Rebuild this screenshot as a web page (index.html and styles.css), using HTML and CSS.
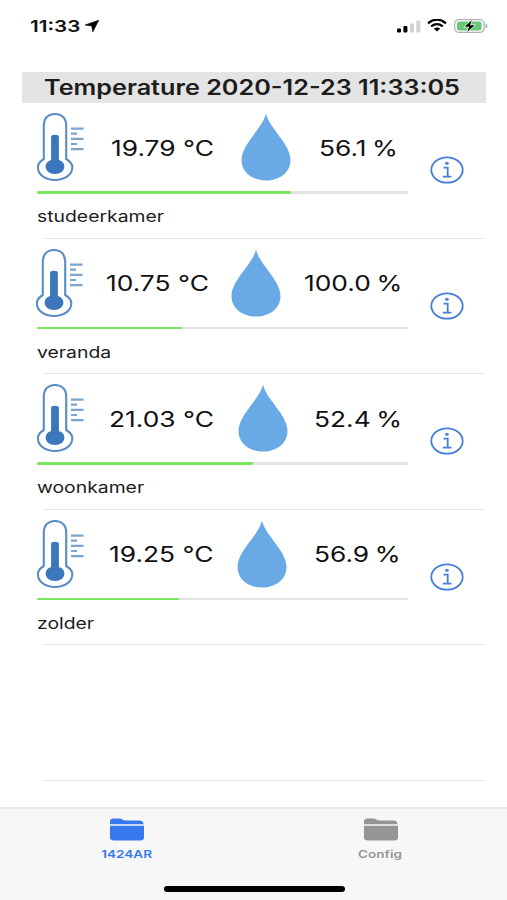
FILE: index.html
```html
<!DOCTYPE html>
<html lang="nl">
<head>
<meta charset="utf-8">
<title>Temperature</title>
<link rel="stylesheet" href="styles.css">
</head>
<body>
<svg class="defs" aria-hidden="true">
  <symbol id="thermo" viewBox="0 0 48 68" preserveAspectRatio="none">
    <path d="M6.8 46V12.5C6.8 5.4 11.2 1 18 1S29.2 5.4 29.2 12.5V46C33.2 48.3 35.3 50.6 35.3 54.2C35.3 61.7 27.7 67 18 67S.9 61.7 .9 54.2C.9 50.6 3 48.3 6.8 46Z" fill="#fff" stroke="#5b8dc4" stroke-width="2.1"/>
    <path d="M14.1 47.1V24Q14.1 21.7 18 21.7T21.9 24V47.1C25.4 48.2 27.4 50.5 27.4 53.5C27.4 58 23.3 61 18 61S8.6 58 8.6 53.5C8.6 50.5 10.6 48.2 14.1 47.1Z" fill="#3c76bc"/>
    <path d="M34 15.7H46.5M34 20.7H40M34 25.8H46.5M34 31H40M34 36.1H46.5" stroke="#7ba3cf" stroke-width="2.2"/>
  </symbol>
  <symbol id="drop" viewBox="0 0 50 68" preserveAspectRatio="none">
    <path d="M25 .5C28 15 49.5 31 49.5 47C49.5 59.5 38.5 67.5 25 67.5S.5 59.5 .5 47C.5 31 22 15 25 .5Z" fill="#69a9e6"/>
  </symbol>
  <symbol id="info" viewBox="0 0 34 28">
    <ellipse cx="17" cy="14" rx="15.7" ry="12.7" fill="none" stroke="#4480d8" stroke-width="1.8"/>
    <ellipse cx="16.9" cy="7.2" rx="1.9" ry="1.5" fill="#4480d8"/>
    <path d="M13.5 11.7H17.7V20.5M12.8 20.7H21.5" fill="none" stroke="#4480d8" stroke-width="1.8"/>
  </symbol>
  <symbol id="folder" viewBox="0 0 34 23">
    <path d="M0 6.3V3.5Q0 .5 3.7.5H9.2C12 .5 12.7 2.5 15.3 2.5H29.5Q33.5 2.5 33.5 6.3Z" fill="currentColor"/>
    <path d="M0 7.7H34V19.2Q34 22.5 30 22.5H4Q0 22.5 0 19.2Z" fill="currentColor"/>
  </symbol>
</svg>
<div class="screen">
  <header class="status">
    <div class="clock"><span class="wide">11:33</span></div>
    <svg class="arrow" viewBox="0 0 14 12"><path d="M13.7.3L7.8 11.8L6.8 5.9L.2 5Z" stroke="#000" stroke-width=".7"/></svg>
    <svg class="signal" viewBox="0 0 24 13"><rect y="8.5" width="4" height="4" rx="1"/><rect x="6.4" y="6" width="4" height="6.5" rx="1"/><rect x="13" y="3.4" width="4" height="9.1" rx="1" fill="#d2d2d2"/><rect x="19.3" y=".5" width="4" height="12" rx="1" fill="#d2d2d2"/></svg>
    <svg class="wifi" viewBox="0 0 20 13"><path d="M1 4.3Q10-3 19 4.3M4.2 7.3Q10 2.9 15.8 7.3" fill="none" stroke="#000" stroke-width="2.3"/><path d="M6.8 9.6Q10 7.2 13.2 9.6L10 12.5Z"/></svg>
    <svg class="battery" viewBox="0 0 34 14"><rect x=".7" y=".7" width="29.4" height="12.6" rx="4" fill="#fff" stroke="#b0b0b0" stroke-width="1.2"/><rect x="3" y="2.5" width="24.5" height="9" rx="2" fill="#66c875"/><path d="M31.5 4.5Q33.5 5 33.5 7T31.5 9.5Z" fill="#b0b0b0"/><path d="M17.8 1L10.8 7.8H15L13.2 13L20.6 6.2H16.1Z" stroke="#fff" stroke-width="1.2" paint-order="stroke"/></svg>
  </header>
  <h1 class="title"><span class="wide">Temperature 2020-12-23 11:33:05</span></h1>
  <main>
    <section class="sensor studeerkamer">
      <div class="readings"><svg class="thermo"><use href="#thermo"/></svg><span class="value wide">19.79 °C</span><svg class="drop"><use href="#drop"/></svg><span class="value humidity wide">56.1 %</span></div>
      <div class="track"><div class="fill" style="width:68.5%"></div></div>
      <div class="name"><span class="wide">studeerkamer</span></div>
      <svg class="info"><use href="#info"/></svg>
    </section>
    <section class="sensor veranda">
      <div class="readings"><svg class="thermo"><use href="#thermo"/></svg><span class="value wide">10.75 °C</span><svg class="drop"><use href="#drop"/></svg><span class="value humidity wide">100.0 %</span></div>
      <div class="track"><div class="fill" style="width:39%"></div></div>
      <div class="name"><span class="wide">veranda</span></div>
      <svg class="info"><use href="#info"/></svg>
    </section>
    <section class="sensor woonkamer">
      <div class="readings"><svg class="thermo"><use href="#thermo"/></svg><span class="value wide">21.03 °C</span><svg class="drop"><use href="#drop"/></svg><span class="value humidity wide">52.4 %</span></div>
      <div class="track"><div class="fill" style="width:58.3%"></div></div>
      <div class="name"><span class="wide">woonkamer</span></div>
      <svg class="info"><use href="#info"/></svg>
    </section>
    <section class="sensor zolder">
      <div class="readings"><svg class="thermo"><use href="#thermo"/></svg><span class="value wide">19.25 °C</span><svg class="drop"><use href="#drop"/></svg><span class="value humidity wide">56.9 %</span></div>
      <div class="track"><div class="fill" style="width:38.2%"></div></div>
      <div class="name"><span class="wide">zolder</span></div>
      <svg class="info"><use href="#info"/></svg>
    </section>
    <section class="sensor"></section>
  </main>
  <footer>
    <nav>
      <a class="tab active"><svg><use href="#folder"/></svg><span class="wide">1424AR</span></a>
      <a class="tab"><svg><use href="#folder"/></svg><span class="wide">Config</span></a>
    </nav>
    <div class="home"></div>
  </footer>
</div>
</body>
</html>
```
FILE: styles.css
```css
* { box-sizing: border-box; }
body { margin: 0; background: #fff; color: #1c1c1c; font-family: Inter, "Liberation Sans", sans-serif; }
svg { display: block; flex: none; }
.defs { display: none; }
.screen { width: 507px; height: 900px; display: flex; flex-direction: column; overflow: hidden; }
.wide { display: inline-block; white-space: nowrap; transform: scaleX(1.21); transform-origin: left center; }

.status { height: 72px; padding: 19px 19px 0 30px; display: flex; align-items: flex-start; flex: none; }
.clock { width: 55px; font-size: 16.5px; font-weight: 600; line-height: 15px; color: #111; }
.clock .wide { transform: scaleX(1.25); }
.arrow { width: 14px; height: 12px; margin-top: 1px; }
.signal { width: 24px; height: 13px; margin: 1px 0 0 auto; }
.wifi { width: 20px; height: 13px; margin: 0 7px 0 6px; }
.battery { width: 34px; height: 14px; }

.title { flex: none; width: 464px; height: 31px; margin: 0 0 0 22px; padding-left: 21.5px; background: #e4e4e4; font-size: 21px; font-weight: 600; line-height: 31px; }
.title .wide { transform: scaleX(1.2); }

.sensor { height: 135.5px; margin: 0 22px 0 37px; display: grid; grid-template-columns: 371px 1fr; grid-template-rows: 88px 3px 1fr; background: linear-gradient(#e9e9e9, #e9e9e9) 6px 100% / 442px 1px no-repeat; }
.readings { display: grid; align-items: start; padding-top: 10px; }
.studeerkamer .readings { grid-template-columns: 73.5px 130px 78px 1fr; }
.veranda .readings { margin-left: -1px; grid-template-columns: 69.5px 125px 73px 1fr; }
.woonkamer .readings { grid-template-columns: 71.5px 129.5px 76px 1fr; }
.zolder .readings { grid-template-columns: 71.5px 128.5px 76.5px 1fr; }
.thermo { width: 48px; height: 68px; }
.drop { width: 50px; height: 68px; }
.value { font-size: 21.5px; line-height: 26px; margin-top: 21.5px; color: #111; transform: scaleX(1.225); }
.humidity { word-spacing: -1.5px; }
.track { grid-column: 1; grid-row: 2; height: 2.5px; background: #e3e3e3; border-radius: 2px; }
.fill { height: 100%; background: #79e65c; border-radius: 2px; }
.name { grid-column: 1; grid-row: 3; padding-top: 12px; font-size: 16px; line-height: 20px; }
.info { grid-column: 2; grid-row: 1; width: 34px; height: 28px; margin: 53px 0 0 22px; }

footer { margin-top: auto; height: 93px; flex: none; background: #f7f7f7; border-top: 2px solid #e8e8e8; display: flex; flex-direction: column; }
nav { display: grid; grid-template-columns: 1fr 1fr; height: 77px; }
.tab { display: flex; flex-direction: column; align-items: center; padding-top: 9px; color: #959595; font-size: 10.5px; font-weight: 600; line-height: 14px; }
.tab svg { width: 34px; height: 23px; margin: 0 0 7px 1px; }
.tab .wide { transform: scaleX(1.29); transform-origin: center; }
.tab.active { color: #3679ef; }
.home { width: 181px; height: 5.5px; border-radius: 3px; background: #000; margin-left: 164px; }
```
